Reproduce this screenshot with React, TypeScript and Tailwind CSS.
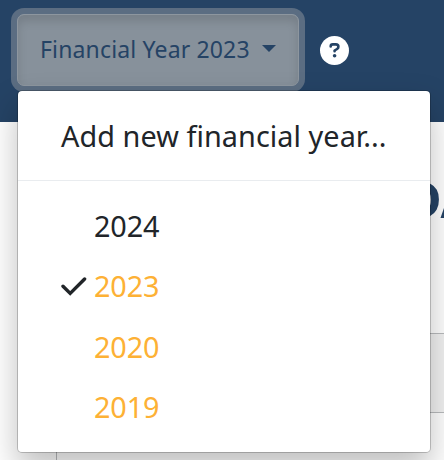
import { clsx } from "clsx";

const years = [
  { year: "2024", closed: false },
  { year: "2023", closed: true },
  { year: "2020", closed: true },
  { year: "2019", closed: true },
];

const selectedYear = "2023";

function CheckIcon() {
  return (
    <svg className="w-[26px] h-[20px]" viewBox="0 0 26 20" fill="none">
      <path
        d="M2 10.2 L9.2 17.4 L23.6 3"
        stroke="#212529"
        strokeWidth="3.4"
        strokeLinecap="round"
        strokeLinejoin="miter"
      />
    </svg>
  );
}

function HelpIcon() {
  return (
    <svg className="w-[29px] h-[29px]" viewBox="0 0 29 29" fill="none">
      <circle cx="14.5" cy="14.5" r="14.5" fill="#fff" />
      <path
        d="M10.7 10.4 V10.2 C10.7 9.1 11.6 8.4 12.8 8.4 H15.8 C17.3 8.4 18.4 9.4 18.4 10.8 C18.4 11.8 17.9 12.5 17.1 13 L14.6 14.5 V15.3"
        stroke="#254365"
        strokeWidth="2.6"
        strokeLinecap="round"
        strokeLinejoin="round"
      />
      <circle cx="14.6" cy="19.8" r="1.8" fill="#254365" />
    </svg>
  );
}

function YearMenu() {
  return (
    <div className="absolute left-[17px] top-[90px] w-[414px] h-[363px] rounded-[5px] border border-black/20 bg-white bg-clip-padding shadow-[0_16px_32px_rgba(0,0,0,0.25)] text-[28.8px] text-[#212529]">
      <button className="flex h-[89px] w-full items-center pl-[43px] pt-px whitespace-nowrap tracking-[0.07px]">
        Add new financial year...
      </button>
      <div className="border-t border-[#e9ecef]" />
      <ul className="pt-[14.3px]">
        {years.map(({ year, closed }) => (
          <li key={year} className="flex h-[60.4px] items-center pl-[43px]">
            <span className="flex w-[33px]">{year === selectedYear && <CheckIcon />}</span>
            <span className={clsx("-tracking-[0.1px]", closed && "text-[#fdb135]")}>{year}</span>
          </li>
        ))}
      </ul>
    </div>
  );
}

export default function App() {
  return (
    <div className="relative h-[460px] w-[444px] overflow-hidden bg-white font-['Noto_Sans','Open_Sans',sans-serif]">
      <header className="flex h-[122px] items-start bg-[#254365] pl-[17px] pt-[14px]">
        <button className="flex h-[72px] w-[282px] shrink-0 items-center rounded-[7px] border border-[#8d969f] bg-[#87919b] pl-[22px] pb-[2px] text-[23px] tracking-[0.15px] text-[#254365] shadow-[0_0_0_6px_#5b6d82,inset_0_6px_10px_rgba(0,0,0,0.125)] whitespace-nowrap">
          Financial Year 2023
          <span className="ml-[12px] mb-[2px] border-x-[7px] border-t-[7px] border-x-transparent border-t-[#254365]" />
        </button>
        <span className="ml-[21px] mt-[22px]">
          <HelpIcon />
        </span>
      </header>

      <main>
        <h1 className="flex h-[211px] pt-[43px] pl-[405px] text-[50px] leading-[68px] font-bold text-[#254365] whitespace-nowrap">
          DA
        </h1>
        <div className="ml-[56px] h-[127px] border-l border-t border-[#b9bbbd]">
          <div className="h-[79px] border-b border-[#b9bbbd] bg-[#f2f2f2]" />
        </div>
      </main>

      <YearMenu />
    </div>
  );
}
